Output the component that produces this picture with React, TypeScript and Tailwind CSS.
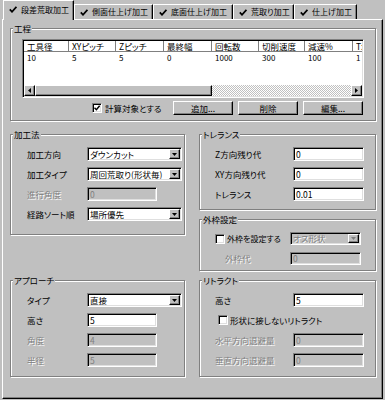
import React from "react";

const sunken =
  "border border-t-[#808080] border-l-[#808080] border-r-white border-b-white p-px shadow-[inset_1px_1px_0_#000,inset_-1px_-1px_0_#dfdfdf]";
const raised =
  "border border-t-white border-l-white border-r-black border-b-black shadow-[inset_-1px_-1px_0_#808080]";
const dim = "text-[#808080] [text-shadow:1px_1px_0_#fff]";

const TabCheck = () => (
  <svg width="8" height="7" viewBox="0 0 8 7" className="shrink-0">
    <path d="M0.8 3.4 L3 5.8 L7.4 0.8" fill="none" stroke="#000" strokeWidth="1.7" />
  </svg>
);

const Arrow = ({ dir, color = "#000" }: { dir: "left" | "right" | "down"; color?: string }) => {
  if (dir === "down")
    return (
      <svg width="5" height="3" viewBox="0 0 5 3">
        <path d="M0 0 H5 L2.5 3 Z" fill={color} />
      </svg>
    );
  return (
    <svg width="3" height="5" viewBox="0 0 3 5">
      <path d={dir === "left" ? "M3 0 V5 L0 2.5 Z" : "M0 0 V5 L3 2.5 Z"} fill={color} />
    </svg>
  );
};

const Tab = ({ label, active, className }: { label: string; active?: boolean; className: string }) => (
  <div
    className={`${className} flex items-center gap-[4px] pl-[5px] text-[8px] border-l border-t border-white border-r border-r-black shadow-[inset_-1px_0_0_#808080] bg-[#c0c0c0] ${
      active ? "relative z-10 -mb-px h-[20px] pb-[2px]" : "h-[15px]"
    }`}
  >
    <TabCheck />
    <span className="whitespace-nowrap">{label}</span>
  </div>
);

const Group = ({ title, className, children }: { title: string; className: string; children?: React.ReactNode }) => (
  <div className={`relative border border-[#808080] shadow-[inset_1px_1px_0_#fff,1px_1px_0_#fff] ${className}`}>
    <span className="absolute -top-[6px] left-[2px] bg-[#c0c0c0] px-px leading-[11px] whitespace-nowrap">{title}</span>
    {children}
  </div>
);

const CheckBox = ({ checked }: { checked?: boolean }) => (
  <span className={`${sunken} w-[10px] h-[10px] bg-white flex items-center justify-center shrink-0`}>
    {checked && (
      <svg width="6" height="6" viewBox="0 0 6 6">
        <path d="M0.5 2.8 L2.4 4.8 L5.6 0.8" fill="none" stroke="#000" strokeWidth="1.4" />
      </svg>
    )}
  </span>
);

const Combo = ({ value, className, disabled }: { value: string; className: string; disabled?: boolean }) => (
  <div className={`${sunken} ${className} flex shrink-0 ${disabled ? "bg-[#c0c0c0]" : "bg-white"}`}>
    <span className={`flex-1 flex items-center pl-px whitespace-nowrap overflow-hidden ${disabled ? dim : ""}`}>{value}</span>
    <span className={`${raised} w-[11px] bg-[#c0c0c0] flex items-center justify-center`}>
      <Arrow dir="down" color={disabled ? "#808080" : "#000"} />
    </span>
  </div>
);

const Input = ({ value, className, disabled }: { value: string; className: string; disabled?: boolean }) => (
  <div className={`${sunken} ${className} shrink-0 flex items-center pl-[2px] ${disabled ? "bg-[#c0c0c0] text-[#808080]" : "bg-white"}`}>
    {value}
  </div>
);

const Row = ({ label, labelW, disabled, children }: { label: string; labelW: string; disabled?: boolean; children: React.ReactNode }) => (
  <div className="flex items-center h-[14px]">
    <span className={`${labelW} shrink-0 whitespace-nowrap ${disabled ? dim : ""}`}>{label}</span>
    {children}
  </div>
);

const columns = ["工具径", "XYピッチ", "Zピッチ", "最終幅", "回転数", "切削速度", "減速%", "T:"];
const values = ["10", "5", "5", "0", "1000", "300", "100", "1"];
const colW = ["w-[45px]", "w-[47px]", "w-[48px]", "w-[48px]", "w-[47px]", "w-[46px]", "w-[48px]", "w-[20px]"];

export default function App() {
  return (
    <div className="w-[385px] h-[400px] overflow-hidden bg-[#c0c0c0] text-black text-[8.5px] leading-none font-['Noto_Sans_CJK_JP',sans-serif] [font-feature-settings:'palt']">
      <div className="flex items-end h-[19px]">
        <Tab active label="段差荒取加工" className="ml-[3px] w-[71px]" />
        <Tab label="側面仕上げ加工" className="w-[79px]" />
        <Tab label="底面仕上げ加工" className="w-[80px]" />
        <Tab label="荒取り加工" className="w-[61px]" />
        <Tab label="仕上げ加工" className="w-[63px]" />
      </div>

      <div className="ml-[2px] w-[381px] h-[380px] border-t border-l border-white border-r border-b border-r-black border-b-black shadow-[inset_-1px_-1px_0_#808080]">
        <Group title="工程" className="ml-[7px] mt-[8px] w-[366px] h-[93px]">
          <div className={`${sunken} ml-[11px] mt-[10px] w-[342px] h-[59px]`}>
            <div className="h-full bg-white flex flex-col overflow-hidden">
              <div className="flex h-[11px] shrink-0">
                {columns.map((c, i) => (
                  <div
                    key={c}
                    className={`${colW[i]} shrink-0 flex items-center pl-[3px] whitespace-nowrap overflow-hidden border-r border-b border-[#808080] shadow-[inset_1px_0_0_#fff]`}
                  >
                    {c}
                  </div>
                ))}
              </div>
              <div className="flex h-[12px] items-center">
                {values.map((v, i) => (
                  <div key={i} className={`${colW[i]} shrink-0 pl-[3px] text-[8px]`}>
                    {v}
                  </div>
                ))}
              </div>
              <div className="mt-auto flex h-[11px]">
                <span className={`${raised} w-[11px] bg-[#c0c0c0] flex items-center justify-center`}>
                  <Arrow dir="left" />
                </span>
                <span className={`${raised} w-[177px] bg-[#c0c0c0]`} />
                <span className="flex-1 bg-[image:repeating-conic-gradient(#c0c0c0_0%_25%,#fff_0%_50%)] bg-[length:2px_2px]" />
                <span className={`${raised} w-[11px] bg-[#c0c0c0] flex items-center justify-center`}>
                  <Arrow dir="right" />
                </span>
              </div>
            </div>
          </div>

          <div className="ml-[81px] mt-[3px] w-[271px] h-[14px] flex items-center">
            <CheckBox checked />
            <span className="ml-[3px] whitespace-nowrap">計算対象とする</span>
            <div className="ml-auto flex gap-[5px]">
              {["追加...", "削除", "編集..."].map((b) => (
                <button key={b} className={`${raised} w-[60px] h-[14px] bg-[#c0c0c0] flex items-center justify-center`}>
                  {b}
                </button>
              ))}
            </div>
          </div>
        </Group>

        <div className="ml-[7px] mt-[13px] flex items-start gap-[14px]">
          <div className="w-[175px]">
            <Group title="加工法" className="h-[101px] pt-[12px] pl-[16px] flex flex-col gap-[6px]">
              <Row label="加工方向" labelW="w-[60px]">
                <Combo value="ダウンカット" className="w-[95px] h-[14px]" />
              </Row>
              <Row label="加工タイプ" labelW="w-[60px]">
                <Combo value="周回荒取り(形状毎)" className="w-[95px] h-[14px]" />
              </Row>
              <Row label="進行角度" labelW="w-[60px]" disabled>
                <Input value="0" disabled className="w-[70px] h-[14px]" />
              </Row>
              <Row label="経路ソート順" labelW="w-[60px]">
                <Combo value="場所優先" className="w-[95px] h-[14px]" />
              </Row>
            </Group>

            <Group title="アプローチ" className="mt-[45px] h-[97px] pt-[12px] pl-[16px] flex flex-col gap-[6px]">
              <Row label="タイプ" labelW="w-[60px]">
                <Combo value="直接" className="w-[95px] h-[14px]" />
              </Row>
              <Row label="高さ" labelW="w-[60px]">
                <Input value="5" className="w-[70px] h-[14px]" />
              </Row>
              <Row label="角度" labelW="w-[60px]" disabled>
                <Input value="4" disabled className="w-[70px] h-[14px]" />
              </Row>
              <Row label="半径" labelW="w-[60px]" disabled>
                <Input value="5" disabled className="w-[70px] h-[14px]" />
              </Row>
            </Group>
          </div>

          <div className="w-[177px]">
            <Group title="トレランス" className="h-[76px] pt-[12px] pl-[15px] flex flex-col gap-[6px]">
              <Row label="Z方向残り代" labelW="w-[78px]">
                <Input value="0" className="w-[71px] h-[14px]" />
              </Row>
              <Row label="XY方向残り代" labelW="w-[78px]">
                <Input value="0" className="w-[71px] h-[14px]" />
              </Row>
              <Row label="トレランス" labelW="w-[78px]">
                <Input value="0.01" className="w-[71px] h-[14px]" />
              </Row>
            </Group>

            <Group title="外枠設定" className="mt-[9px] h-[52px] pt-[12px] pl-[15px]">
              <div className="flex items-center h-[13px]">
                <CheckBox />
                <span className="ml-[2px] w-[63px] shrink-0 whitespace-nowrap text-[8px]">外枠を設定する</span>
                <Combo value="オス形状" disabled className="w-[71px] h-[13px]" />
              </div>
              <div className="mt-[7px] flex items-center h-[13px]">
                <span className={`ml-[10px] w-[65px] shrink-0 ${dim}`}>外枠代</span>
                <Input value="0" disabled className="w-[71px] h-[13px]" />
              </div>
            </Group>

            <Group title="リトラクト" className="mt-[9px] h-[97px] pt-[12px] pl-[15px] flex flex-col gap-[6px]">
              <Row label="高さ" labelW="w-[78px]">
                <Input value="5" className="w-[71px] h-[14px]" />
              </Row>
              <div className="flex items-center h-[14px]">
                <span className="ml-[3px]">
                  <CheckBox />
                </span>
                <span className="ml-[2px] whitespace-nowrap">形状に接しないリトラクト</span>
              </div>
              <Row label="水平方向退避量" labelW="w-[78px]" disabled>
                <Input value="0" disabled className="w-[71px] h-[14px]" />
              </Row>
              <Row label="垂直方向退避量" labelW="w-[78px]" disabled>
                <Input value="0" disabled className="w-[71px] h-[14px]" />
              </Row>
            </Group>
          </div>
        </div>
      </div>
    </div>
  );
}
